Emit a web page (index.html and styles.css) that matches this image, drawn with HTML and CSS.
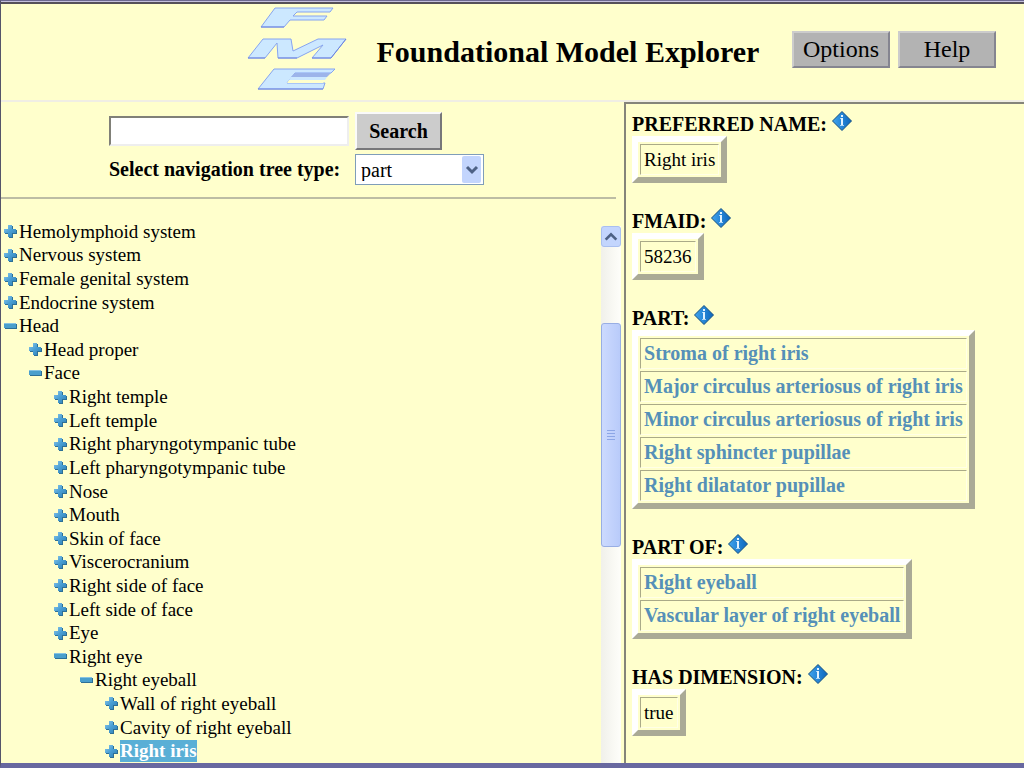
FILE: index.html
```html
<!DOCTYPE html>
<html lang="en">
<head>
    <meta charset="UTF-8">
    <meta name="viewport" content="width=device-width, initial-scale=1.0">
    <title>Foundational Model Explorer</title>
    <link rel="stylesheet" href="styles.css">
</head>
<body>
    <!-- shared icons -->
    <svg class="sprite" aria-hidden="true">
        <defs>
            <linearGradient id="blue" x1="0" y1="0" x2="1" y2="1">
                <stop offset="0" stop-color="#8cc8ea"/>
                <stop offset="0.5" stop-color="#4a9fd4"/>
                <stop offset="1" stop-color="#2f7fb4"/>
            </linearGradient>
            <linearGradient id="gem" x1="0" y1="0" x2="1" y2="0">
                <stop offset="0" stop-color="#3fa4ee"/>
                <stop offset="1" stop-color="#0c66bd"/>
            </linearGradient>
        </defs>
        <symbol id="plus" viewBox="0 0 13 13">
            <path d="M5 1h4v4h4v4h-4v4h-4v-4h-4v-4h4z" fill="#2d6f96"/>
            <path d="M4 0h4v4h4v4h-4v4h-4v-4h-4v-4h4z" fill="url(#blue)"/>
        </symbol>
        <symbol id="minus" viewBox="0 0 13 13">
            <path d="M1 4h12v5h-12z" fill="#2d6f96"/>
            <path d="M0 3h12v5h-12z" fill="#4a9fcc"/>
            <path d="M0 3h12v1h-12z" fill="#86c3e2"/>
        </symbol>
        <symbol id="info" viewBox="0 0 20 20">
            <path d="M10 0.500l9.500 9.500l-9.500 9.500l-9.500-9.500z" fill="url(#gem)" stroke="#124e80"/>
            <path d="M9 7h2v8h-2z" fill="#e2f3ff"/>
            <path d="M8 7h1v1h-1zM8 14h4v1h-4z" fill="#a8d4f6"/>
            <path d="M9 4h2v2h-2z" fill="#e2f3ff"/>
        </symbol>
    </svg>

    <header class="banner">
        <svg class="logo" viewBox="0 0 100 84" role="img" aria-label="FME">
            <g fill="#cce8ff" stroke="#86a4f0" stroke-linejoin="round">
                <path d="M28 1H86L83 5H50L46 9H80L77 13H43L37 20H14Z"/>
                <path d="M16 32H44L46 44L71 32H99L84 51H65L76 38L50 51H31L30 36L18 51H1Z"/>
                <path d="M27 62H88L84 66H48L40 76H78L76 82H11Z"/>
            </g>
            <path d="M48 66H84L80 70H44Z" fill="#9cb4ea"/>
            <path d="M44 70H80L78 73H42Z" fill="#cce8ff"/>
            <path d="M42 73H78L76 76H40Z" fill="#ffffcc"/>
            <path d="M14 20H37M1 51H18M31 51H50M65 51H84L99 32M11 82H76" fill="none" stroke="#6c84e0"/>
        </svg>
        <h1>Foundational Model Explorer</h1>
        <nav class="menu">
            <button type="button">Options</button>
            <button type="button">Help</button>
        </nav>
    </header>

    <main class="frames">
        <section class="left">
            <form class="search">
                <input type="text" id="term" aria-label="Search term">
                <button type="button">Search</button>
                <label for="treeType">Select navigation tree type:</label>
                <select id="treeType">
                    <option>part</option>
                </select>
            </form>
            <div class="scroller">
                <ul class="tree">
                    <li><svg><use href="#plus"/></svg><a href="#">Hemolymphoid system</a></li>
                    <li><svg><use href="#plus"/></svg><a href="#">Nervous system</a></li>
                    <li><svg><use href="#plus"/></svg><a href="#">Female genital system</a></li>
                    <li><svg><use href="#plus"/></svg><a href="#">Endocrine system</a></li>
                    <li><svg><use href="#minus"/></svg><a href="#">Head</a></li>
                    <li class="l1"><svg><use href="#plus"/></svg><a href="#">Head proper</a></li>
                    <li class="l1"><svg><use href="#minus"/></svg><a href="#">Face</a></li>
                    <li class="l2"><svg><use href="#plus"/></svg><a href="#">Right temple</a></li>
                    <li class="l2"><svg><use href="#plus"/></svg><a href="#">Left temple</a></li>
                    <li class="l2"><svg><use href="#plus"/></svg><a href="#">Right pharyngotympanic tube</a></li>
                    <li class="l2"><svg><use href="#plus"/></svg><a href="#">Left pharyngotympanic tube</a></li>
                    <li class="l2"><svg><use href="#plus"/></svg><a href="#">Nose</a></li>
                    <li class="l2"><svg><use href="#plus"/></svg><a href="#">Mouth</a></li>
                    <li class="l2"><svg><use href="#plus"/></svg><a href="#">Skin of face</a></li>
                    <li class="l2"><svg><use href="#plus"/></svg><a href="#">Viscerocranium</a></li>
                    <li class="l2"><svg><use href="#plus"/></svg><a href="#">Right side of face</a></li>
                    <li class="l2"><svg><use href="#plus"/></svg><a href="#">Left side of face</a></li>
                    <li class="l2"><svg><use href="#plus"/></svg><a href="#">Eye</a></li>
                    <li class="l2"><svg><use href="#minus"/></svg><a href="#">Right eye</a></li>
                    <li class="l3"><svg><use href="#minus"/></svg><a href="#">Right eyeball</a></li>
                    <li class="l4"><svg><use href="#plus"/></svg><a href="#">Wall of right eyeball</a></li>
                    <li class="l4"><svg><use href="#plus"/></svg><a href="#">Cavity of right eyeball</a></li>
                    <li class="l4"><svg><use href="#plus"/></svg><a href="#" class="selected">Right iris</a></li>
                </ul>
                <div class="scrollbar">
                    <button type="button" aria-label="Scroll up">
                        <svg viewBox="0 0 12 12"><path d="M2 8l4-4l4 4" fill="none" stroke="#4d6185" stroke-width="2"/></svg>
                    </button>
                    <div class="track">
                        <div class="thumb"><i></i><i></i><i></i><i></i></div>
                    </div>
                </div>
            </div>
        </section>

        <section class="right">
            <h2>PREFERRED NAME: <svg><use href="#info"/></svg></h2>
            <table>
                <tr><td>Right iris</td></tr>
            </table>
            <h2>FMAID: <svg><use href="#info"/></svg></h2>
            <table>
                <tr><td>58236</td></tr>
            </table>
            <h2>PART: <svg><use href="#info"/></svg></h2>
            <table>
                <tr><td><a href="#">Stroma of right iris</a></td></tr>
                <tr><td><a href="#">Major circulus arteriosus of right iris</a></td></tr>
                <tr><td><a href="#">Minor circulus arteriosus of right iris</a></td></tr>
                <tr><td><a href="#">Right sphincter pupillae</a></td></tr>
                <tr><td><a href="#">Right dilatator pupillae</a></td></tr>
            </table>
            <h2>PART OF: <svg><use href="#info"/></svg></h2>
            <table>
                <tr><td><a href="#">Right eyeball</a></td></tr>
                <tr><td><a href="#">Vascular layer of right eyeball</a></td></tr>
            </table>
            <h2>HAS DIMENSION: <svg><use href="#info"/></svg></h2>
            <table>
                <tr><td>true</td></tr>
            </table>
        </section>
    </main>
</body>
</html>
```
FILE: styles.css
```css
* {
    box-sizing: border-box;
}
body {
    margin: 0;
    height: 100vh;
    display: flex;
    flex-direction: column;
    font-family: "Liberation Serif", "Times New Roman", serif;
    font-size: 19px;
    color: #000;
    background: #ffffcc;
    border-top: 1px solid #6c6890;
    border-left: 1px solid #55556a;
    border-bottom: 5px solid #6868a0;
}
.sprite {
    position: absolute;
    width: 0;
    height: 0;
}
a {
    color: inherit;
    text-decoration: none;
}
button, input, select {
    font-family: inherit;
    color: inherit;
}

/* top frame */
.banner {
    display: flex;
    align-items: center;
    height: 100px;
    flex: none;
    margin-top: 1px;
    padding: 0 28px 6px 24%;
    border-top: 2px solid #555058;
    border-bottom: 2px solid #f0eee4;
    box-shadow: 0 -1px #c4c0dc;
}
.logo {
    width: 100px;
    height: 84px;
}
.banner h1 {
    margin: 0 0 0 30px;
    padding-top: 6px;
    font-size: 30px;
    white-space: nowrap;
}
.menu {
    display: flex;
    gap: 8px;
    margin-left: auto;
}
.menu button {
    width: 98px;
    height: 37px;
    padding: 0;
    font-size: 24px;
    background: #b3b3b3;
    border: 2px solid;
    border-color: #ccc #858590 #858590 #ccc;
}

.frames {
    flex: 1;
    min-height: 0;
    display: grid;
    grid-template-columns: 61fr 39fr;
}

/* navigation frame */
.left {
    display: flex;
    flex-direction: column;
    min-height: 0;
}
.search {
    display: grid;
    grid-template-columns: 240px auto;
    justify-content: start;
    align-items: center;
    gap: 4px 6px;
    margin-right: 9px;
    padding: 10px 0 12px 108px;
    border-bottom: 2px solid #bdbda4;
}
.search input {
    height: 30px;
    background: #fff;
    border: 2px solid;
    border-color: #808078 #eee #eee #808078;
}
.search button {
    justify-self: start;
    width: 87px;
    height: 38px;
    padding: 0;
    font-size: 20px;
    font-weight: bold;
    background: #ccc;
    border: 2px solid;
    border-color: #fafafa #77777a #77777a #fafafa;
}
.search label {
    font-size: 20px;
    font-weight: bold;
    white-space: nowrap;
}
.search select {
    width: 129px;
    height: 31px;
    padding: 0 5px;
    font-size: 20px;
    appearance: none;
    border: 1px solid #7f9db9;
    border-radius: 0;
    background: #fff url("data:image/svg+xml,%3Csvg xmlns='http://www.w3.org/2000/svg' width='20' height='27'%3E%3Crect width='19' height='27' rx='2' fill='%23c3d5fd'/%3E%3Cpath d='M5 11l5 5l5-5' fill='none' stroke='%234d6185' stroke-width='3'/%3E%3C/svg%3E") no-repeat right 1px center;
}
.scroller {
    flex: 1;
    min-height: 0;
    display: flex;
    justify-content: space-between;
    padding-top: 21px;
}
.tree {
    display: flex;
    flex-direction: column;
    margin: 0;
    padding: 0 0 0 3px;
    list-style: none;
}
.tree li {
    flex: 1;
    display: flex;
    align-items: center;
    line-height: 22px;
}
.tree svg {
    width: 13px;
    height: 13px;
    margin-right: 2px;
}
.tree .l1 { padding-left: 25px; }
.tree .l2 { padding-left: 50px; }
.tree .l3 { padding-left: 76px; }
.tree .l4 { padding-left: 101px; }
.tree .selected {
    color: #fff;
    font-weight: bold;
    background: #5aafd6;
}
.scrollbar {
    width: 20px;
    margin: 6px 4px 0 0;
    background: linear-gradient(to right, #f0f0ea, #fefefa);
    display: flex;
    flex-direction: column;
}
.scrollbar button {
    height: 21px;
    padding: 0;
    background: #c3d5fd;
    border: 1px solid #a9bff0;
    border-radius: 3px;
}
.scrollbar button svg {
    display: block;
    width: 16px;
    height: 16px;
    margin: auto;
}
.track {
    flex: 1;
    padding-top: 76px;
}
.thumb {
    height: 51%;
    display: flex;
    flex-direction: column;
    justify-content: center;
    align-items: center;
    gap: 2px;
    background: linear-gradient(to right, #ccdafe, #b9cbfa);
    border: 1px solid #98aee4;
    border-radius: 3px;
}
.thumb i {
    width: 8px;
    height: 1px;
    background: #8ca6e6;
}

/* detail frame */
.right {
    margin-left: -1px;
    padding: 8px 0 0 6px;
    border-top: 2px solid #85857a;
    border-left: 2px solid #85857a;
    overflow: hidden;
}
.right h2 {
    display: flex;
    align-items: center;
    gap: 5px;
    margin: 0;
    height: 24px;
    font-size: 20px;
}
.right h2 svg {
    width: 20px;
    height: 20px;
    margin-bottom: 6px;
}
.right table {
    margin-bottom: 26px;
    border: 6px solid;
    border-color: #fff #aaaa96 #aaaa96 #fff;
    border-spacing: 2px;
}
.right td {
    height: 31px;
    padding: 0 3px;
    border: 1px solid;
    border-color: #aaaa88 #ffffe6 #ffffe6 #aaaa88;
}
.right td a {
    color: #5590b8;
    font-size: 20px;
    font-weight: bold;
}
```
